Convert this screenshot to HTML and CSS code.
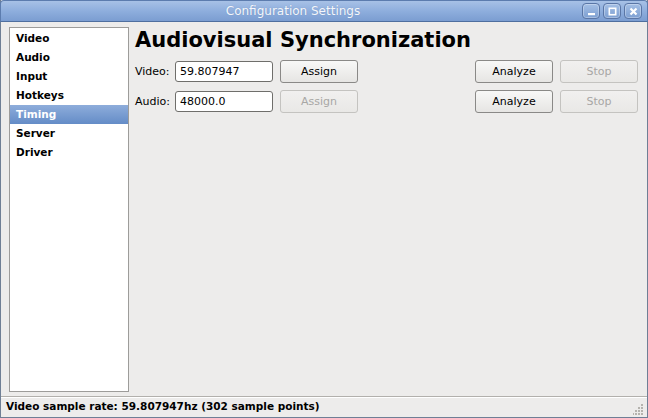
FILE: index.html
```html
<!DOCTYPE html>
<html>
<head>
<meta charset="utf-8">
<link rel="stylesheet" href="styles.css">
</head>
<body>
<div class="window">
  <div class="titlebar">
    <span class="title">Configuration Settings</span>
    <div class="wbtns">
      <span class="wbtn"><svg width="13" height="13" viewBox="0 0 13 13"><rect x="3" y="8" width="7" height="2.2" fill="#fff"/></svg></span>
      <span class="wbtn"><svg width="13" height="13" viewBox="0 0 13 13"><rect x="3.3" y="3.3" width="6.4" height="6.4" fill="none" stroke="#fff" stroke-width="1.6"/></svg></span>
      <span class="wbtn"><svg width="13" height="13" viewBox="0 0 13 13"><path d="M3.5 3.5 L9.5 9.5 M9.5 3.5 L3.5 9.5" stroke="#fff" stroke-width="2.2"/></svg></span>
    </div>
  </div>
  <div class="body">
    <div class="main">
      <ul class="list">
        <li>Video</li>
        <li>Audio</li>
        <li>Input</li>
        <li>Hotkeys</li>
        <li class="sel">Timing</li>
        <li>Server</li>
        <li>Driver</li>
      </ul>
      <div class="panel">
        <h1>Audiovisual Synchronization</h1>
        <div class="row">
          <span class="lbl">Video:</span>
          <input class="field" value="59.807947">
          <button class="btn">Assign</button>
          <span class="spacer"></span>
          <button class="btn">Analyze</button>
          <button class="btn" disabled>Stop</button>
        </div>
        <div class="row">
          <span class="lbl">Audio:</span>
          <input class="field" value="48000.0">
          <button class="btn" disabled>Assign</button>
          <span class="spacer"></span>
          <button class="btn">Analyze</button>
          <button class="btn" disabled>Stop</button>
        </div>
      </div>
    </div>
    <div class="status">
      <span>Video sample rate: 59.807947hz (302 sample points)</span>
      <svg class="grip" width="11" height="11" viewBox="0 0 11 11">
        <g fill="#b5b3ae">
          <rect x="8" y="0" width="2" height="2"/>
          <rect x="5" y="3" width="2" height="2"/><rect x="8" y="3" width="2" height="2"/>
          <rect x="2" y="6" width="2" height="2"/><rect x="5" y="6" width="2" height="2"/><rect x="8" y="6" width="2" height="2"/>
          <rect x="-1" y="9" width="2" height="2"/><rect x="2" y="9" width="2" height="2"/><rect x="5" y="9" width="2" height="2"/><rect x="8" y="9" width="2" height="2"/>
        </g>
      </svg>
    </div>
  </div>
</div>
</body>
</html>
```
FILE: styles.css
```css
* { box-sizing: border-box; }
html, body { margin: 0; padding: 0; }
body {
  width: 648px; height: 418px; overflow: hidden;
  font-family: "DejaVu Sans", sans-serif;
  font-size: 11px;
  color: #000;
  background: #edeceb;
}
.window {
  width: 648px; height: 418px;
  display: flex; flex-direction: column;
  border: 1px solid #6f7f95;
  border-top: none;
  background: #edeceb;
}
.titlebar {
  height: 22px;
  flex: none;
  position: relative;
  display: flex; align-items: center; justify-content: center;
  padding-right: 62px;
  background: linear-gradient(#a7c1e6, #8eaedd 50%, #7b9dd1);
  border-top: 1px solid #5c7cae;
  border-bottom: 1px solid #4f6f9f;
  margin: 0 -1px;
  border-left: 1px solid #5c7cae;
  border-right: 1px solid #5c7cae;
  border-radius: 4px 4px 0 0;
}
.title {
  color: #f4f7fc;
  font-size: 12px;
  font-family: "DejaVu Sans", sans-serif;
  text-shadow: 0 0 1px rgba(60,80,120,.3);
}
.wbtns {
  position: absolute; right: 5px; top: 2px;
  display: flex; gap: 3px;
}
.wbtn {
  width: 18px; height: 16px;
  border: 1px solid #5a76a6;
  border-radius: 4px;
  background: linear-gradient(#a4bfe5, #7d9fd2);
  display: flex; align-items: center; justify-content: center;
  box-shadow: inset 0 0 0 1px rgba(255,255,255,.3);
}
.body {
  flex: 1;
  display: flex; flex-direction: column;
  padding: 5px 0 0 0;
}
.main {
  flex: 1;
  display: flex;
  padding: 0 9px 4px 8px;
  gap: 6px;
}
.list {
  list-style: none; margin: 0; padding: 1px 0 0;
  width: 120px;
  background: #fff;
  border: 1px solid #9d9c9a;
  font-weight: bold;
  font-size: 10.5px;
}
.list li {
  height: 19px;
  line-height: 19px;
  padding-left: 6px;
}
.list li.sel {
  background: linear-gradient(#8eaddb, #648cc7);
  color: #fff;
}
.panel { flex: 1; display: flex; flex-direction: column; }
h1 {
  margin: 0;
  font-size: 21px;
  font-weight: bold;
  line-height: 26px;
  height: 29px;
}
.row {
  display: flex; align-items: center;
  height: 30px;
}
.lbl { width: 40px; }
.field {
  width: 98px; height: 21px;
  border: 1px solid #6f6e6b;
  border-radius: 3px;
  font: 11px "DejaVu Sans", sans-serif;
  padding: 0 4px;
  margin-right: 7px;
  background: #fff;
  color: #000;
  outline: none;
}
.btn {
  width: 78px; height: 23px;
  border: 1px solid #8a8987;
  border-radius: 3px;
  background: linear-gradient(#f8f8f7, #e6e5e3);
  font: 11px "DejaVu Sans", sans-serif;
  color: #000;
  padding: 0;
  margin-right: 7px;
}
.btn[disabled] {
  color: #a8a7a5;
  border-color: #c4c3c0;
  background: linear-gradient(#f1f0ef, #e9e8e6);
}
.spacer { flex: 1; }
.row .btn:last-child { margin-right: 0; }
.status {
  flex: none;
  height: 21px;
  border-top: 1px solid #b2b0ac;
  box-shadow: inset 0 1px 0 #fff;
  display: flex; align-items: center;
  padding: 0 0 3px 5px;
  font-weight: bold;
  font-size: 10.5px;
  position: relative;
}
.grip { position: absolute; right: 3px; bottom: 2px; }
```
